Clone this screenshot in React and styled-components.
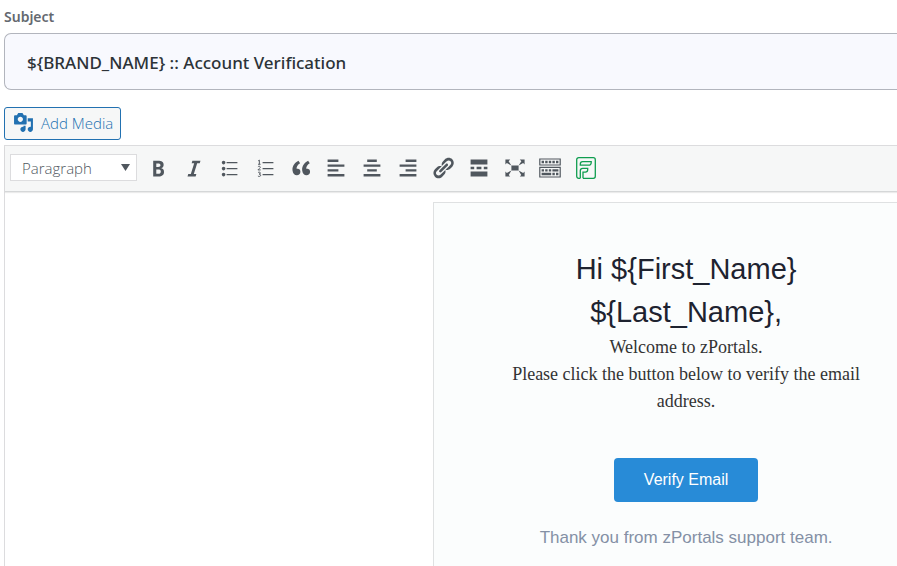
import React, { useState } from 'react';
import styled, { createGlobalStyle } from 'styled-components';

const GlobalStyle = createGlobalStyle`
  * {
    box-sizing: border-box;
  }

  body {
    margin: 0;
    background: #fff;
    color: #3c434a;
    font-family: 'Open Sans', 'Noto Sans', sans-serif;
  }
`;

const Page = styled.main`
  min-height: 100vh;
  padding: 8px 0 0 4px;
  display: flex;
  flex-direction: column;
`;

const SubjectField = styled.div`
  display: flex;
  flex-direction: column;
  gap: 8px;
`;

const SubjectLabel = styled.label`
  font-family: 'Noto Sans', sans-serif;
  font-size: 14px;
  line-height: 17px;
  font-weight: 600;
  color: #646970;
`;

const SubjectInput = styled.input`
  width: 100%;
  height: 57px;
  padding: 2px 22px 0;
  border: 1px solid #b2b5bd;
  border-right: none;
  border-radius: 7px 0 0 7px;
  background: #f8f9fe;
  color: #2c3338;
  font-family: 'Noto Sans', sans-serif;
  font-size: 17px;
  font-weight: 500;
`;

const MediaButton = styled.button`
  align-self: flex-start;
  height: 33px;
  margin: 17px 0 5px;
  padding: 0 7px 2px 8px;
  display: flex;
  align-items: center;
  gap: 7px;
  border: 1px solid #2271b1;
  border-radius: 3px;
  background: #f6f7f7;
  color: #2271b1;
  font-family: inherit;
  font-size: 15px;
  font-weight: 300;
  cursor: pointer;
`;

const Editor = styled.section`
  flex: 1;
  display: flex;
  flex-direction: column;
  border: 1px solid #dcdcde;
  border-width: 1px 0 0 1px;
`;

const Toolbar = styled.div`
  height: 46px;
  padding: 0 5px 2px;
  display: flex;
  align-items: center;
  gap: 4px;
  background: #f6f7f7;
  border-bottom: 1px solid #d5d7d8;
  box-shadow: 0 1px 1px rgba(0, 0, 0, 0.08);
`;

const FormatBox = styled.div`
  width: 127px;
  display: grid;
  align-items: center;

  > * {
    grid-area: 1 / 1;
  }

  svg {
    justify-self: end;
    margin-right: 7px;
    pointer-events: none;
  }
`;

const FormatSelect = styled.select`
  appearance: none;
  width: 100%;
  height: 27px;
  padding: 0 11px;
  border: 1px solid #dcdcde;
  border-radius: 0;
  background: #fff;
  color: #50575e;
  font-family: inherit;
  font-size: 15px;
  font-weight: 300;
`;

const ToolGroup = styled.div`
  width: 462px;
  display: flex;
  justify-content: space-between;
`;

const ToolButton = styled.button`
  width: 34px;
  height: 34px;
  padding: 0;
  display: flex;
  align-items: center;
  justify-content: center;
  border: none;
  background: none;
  color: ${({ $color }) => $color || '#50575e'};
  cursor: pointer;
`;

const Canvas = styled.div`
  flex: 1;
  padding: 10px 0 0 48%;
  display: flex;
`;

const MailCard = styled.article`
  flex: 1;
  padding: 45px 34px 0 75px;
  display: flex;
  flex-direction: column;
  align-items: center;
  border: 1px solid #dfe1e2;
  border-width: 1px 0 0 1px;
  background: #fbfdfd;
  text-align: center;
  font-family: 'Liberation Sans', Arial, sans-serif;
`;

const Greeting = styled.h1`
  margin: 0;
  color: #1e2330;
  font-size: 29px;
  line-height: 43px;
  font-weight: 400;
`;

const Message = styled.p`
  margin: 0;
  color: #333;
  font-family: 'Liberation Serif', 'Times New Roman', serif;
  font-size: 18px;
  line-height: 27px;
`;

const VerifyLink = styled.a`
  margin: 43px 0 22px;
  padding: 0 30px;
  border-radius: 4px;
  background: #288bd7;
  color: #fff;
  font-size: 16px;
  line-height: 44px;
  text-decoration: none;
`;

const SignOff = styled.p`
  margin: 0;
  color: #8490a5;
  font-size: 17px;
  line-height: 27px;
`;

const Glyph = ({ d, size = 24 }) => (
  <svg width={size} height={size} viewBox="0 0 20 20" fill="currentColor" fillRule="evenodd" aria-hidden="true">
    <path d={d} />
  </svg>
);

const mediaPath =
  'M13 11V4c0-.55-.45-1-1-1h-1.67L9 1H5L3.67 3H2c-.55 0-1 .45-1 1v7c0 .55.45 1 1 1h10c.55 0 1-.45 1-1zM7 4.5c1.38 0 2.5 1.12 2.5 2.5S8.38 9.5 7 9.5 4.5 8.38 4.5 7 5.62 4.5 7 4.5zM14 6h5v10.5c0 1.38-1.12 2.5-2.5 2.5S14 17.88 14 16.5s1.12-2.5 2.5-2.5c.17 0 .34.02.5.05V9h-3V6zm-4 8.05V13h2v3.5c0 1.38-1.12 2.5-2.5 2.5S7 17.88 7 16.5 8.12 14 9.5 14c.17 0 .34.02.5.05z';

const NumberedList = () => (
  <svg width="24" height="24" viewBox="0 0 20 20" fill="none" stroke="currentColor" aria-hidden="true">
    <path d="M8 5.5h9M8 10.5h9M8 15.5h9" />
    <path
      strokeWidth="0.8"
      d="M4.3 4.1l1-.7v3.4M4.2 6.9h2.1M4.1 9c.5-.7 2-.6 2 .3 0 .8-1.3 1.4-2 2.3h2.3M4.2 13.8c.7-.6 2-.4 2 .4 0 .6-.6.9-1.2.9.7 0 1.4.3 1.4 1 0 1-1.5 1.2-2.3.6"
    />
  </svg>
);

const FormIcon = () => (
  <svg width="20" height="22" viewBox="0 0 20 22" fill="none" stroke="currentColor" strokeWidth="1.3" aria-hidden="true">
    <path d="M4.3 21.3H2.7a2 2 0 0 1-2-2V2.7a2 2 0 0 1 2-2h14.6a2 2 0 0 1 2 2v16.6a2 2 0 0 1-2 2H7" />
    <path d="M6.6 4.6h8.6v1.2a2.4 2.4 0 0 1-2.4 2.4H4.3V7a2.4 2.4 0 0 1 2.3-2.4z" />
    <path d="M4.3 21.3v-7.5a2.4 2.4 0 0 1 2.4-2.4h5v1.3a2.4 2.4 0 0 1-2.4 2.4H7v6.2" />
  </svg>
);

const tools = [
  {
    label: 'Bold',
    d: 'M6 4v13h4.54c1.37 0 2.46-.33 3.26-1 .8-.66 1.2-1.58 1.2-2.77 0-.84-.17-1.51-.51-2.01s-.9-.85-1.67-1.03v-.09c.57-.1 1.02-.4 1.36-.9s.51-1.13.51-1.91c0-1.14-.39-1.98-1.17-2.5C12.75 4.26 11.5 4 9.78 4H6zm2.57 5.15V6.26h1.36c.73 0 1.27.11 1.61.32.34.22.51.58.51 1.07 0 .54-.16.92-.47 1.15s-.82.35-1.51.35h-1.5zm0 2.19h1.6c1.44 0 2.16.53 2.16 1.61 0 .6-.17 1.05-.51 1.34s-.86.43-1.57.43H8.57v-3.38z',
  },
  { label: 'Italic', d: 'M14.78 6h-2.13l-2.8 9h2.12l-.62 2H4.6l.62-2h2.14l2.8-9H8.03l.62-2h6.75z' },
  {
    label: 'Bulleted list',
    d: 'M5.5 7C4.67 7 4 6.33 4 5.5 4 4.68 4.67 4 5.5 4 6.32 4 7 4.68 7 5.5 7 6.33 6.32 7 5.5 7zM8 5h9v1H8V5zm-2.5 7c-.83 0-1.5-.67-1.5-1.5C4 9.68 4.67 9 5.5 9c.82 0 1.5.68 1.5 1.5 0 .83-.68 1.5-1.5 1.5zM8 10h9v1H8v-1zm-2.5 7c-.83 0-1.5-.67-1.5-1.5 0-.82.67-1.5 1.5-1.5.82 0 1.5.68 1.5 1.5 0 .83-.68 1.5-1.5 1.5zM8 15h9v1H8v-1z',
  },
  { label: 'Numbered list', icon: <NumberedList /> },
  {
    label: 'Blockquote',
    d: 'M9.49 13.22c0-.74-.2-1.38-.61-1.9-.62-.78-1.83-.88-2.53-.72-.29-1.65 1.11-3.75 2.92-4.65L7.88 4c-2.73 1.3-5.42 4.28-4.96 8.05C3.21 14.43 4.59 16 6.54 16c.85 0 1.56-.25 2.12-.75s.83-1.18.83-2.03zm8.05 0c0-.74-.2-1.38-.61-1.9-.63-.78-1.83-.88-2.53-.72-.29-1.65 1.11-3.75 2.92-4.65L15.93 4c-2.73 1.3-5.41 4.28-4.95 8.05.29 2.38 1.66 3.95 3.61 3.95.85 0 1.56-.25 2.12-.75s.83-1.18.83-2.03z',
  },
  { label: 'Align left', d: 'M12 5V3H3v2h9zm5 4V7H3v2h14zm-5 4v-2H3v2h9zm5 4v-2H3v2h14z' },
  { label: 'Align center', d: 'M14 5V3H6v2h8zm3 4V7H3v2h14zm-3 4v-2H6v2h8zm3 4v-2H3v2h14z' },
  { label: 'Align right', d: 'M17 5V3H8v2h9zm0 4V7H3v2h14zm0 4v-2H8v2h9zm0 4v-2H3v2h14z' },
  {
    label: 'Insert link',
    d: 'M17.74 2.76c1.68 1.69 1.68 4.41 0 6.1l-1.53 1.52c-1.12 1.12-2.7 1.47-4.14 1.09l2.62-2.61.76-.77.76-.76c.84-.84.84-2.2 0-3.04-.84-.85-2.2-.85-3.04 0l-.77.76-3.38 3.38c-.37-1.44-.02-3.02 1.1-4.14l1.52-1.53c1.69-1.68 4.42-1.68 6.1 0zM8.59 13.43l5.34-5.34c.42-.42.42-1.1 0-1.52-.44-.43-1.13-.39-1.53 0l-5.33 5.34c-.42.42-.42 1.1 0 1.52.44.43 1.13.39 1.52 0zm-.76 2.29l4.14-4.15c.38 1.44.03 3.02-1.09 4.14l-1.52 1.53c-1.69 1.68-4.41 1.68-6.1 0-1.68-1.68-1.68-4.42 0-6.1l1.53-1.52c1.12-1.12 2.7-1.47 4.14-1.1l-4.14 4.15c-.85.84-.85 2.2 0 3.05.84.84 2.2.84 3.04 0z',
  },
  { label: 'Read more', d: 'M17 7V3H3v4h14zM6 11V9H3v2h3zm6 0V9H8v2h4zm5 0V9h-3v2h3zm0 6v-4H3v4h14z' },
  {
    label: 'Fullscreen',
    d: 'M7 8h6v4H7zm-5 5v4h4l-1.2-1.2L7 12l-3.8 2.2M14 17h4v-4l-1.2 1.2L13 12l2.2 3.8M14 3l1.3 1.3L13 8l3.8-2.2L18 7V3M6 3H2v4l1.2-1.2L7 8 4.7 4.3',
  },
  {
    label: 'Toolbar toggle',
    d: 'M19 2v6H1V2h18zm-1 5V3H2v4h16zM5 4v2H3V4h2zm3 0v2H6V4h2zm3 0v2H9V4h2zm3 0v2h-2V4h2zm3 0v2h-2V4h2zm2 5v9H1V9h18zm-1 8v-7H2v7h16zM5 11v2H3v-2h2zm3 0v2H6v-2h2zm3 0v2H9v-2h2zm6 0v2h-5v-2h5zm-6 3v2H3v-2h8zm3 0v2h-2v-2h2zm3 0v2h-2v-2h2z',
  },
  { label: 'Insert form', icon: <FormIcon />, color: '#0f9d4f' },
];

function App() {
  const [subject, setSubject] = useState('${BRAND_NAME} :: Account Verification');
  const [format, setFormat] = useState('p');

  return (
    <>
      <GlobalStyle />
      <Page>
        <SubjectField>
          <SubjectLabel htmlFor="subject">Subject</SubjectLabel>
          <SubjectInput id="subject" type="text" value={subject} onChange={(e) => setSubject(e.target.value)} />
        </SubjectField>
        <MediaButton type="button">
          <Glyph d={mediaPath} size={21} />
          Add Media
        </MediaButton>
        <Editor>
          <Toolbar>
            <FormatBox>
              <FormatSelect aria-label="Format" value={format} onChange={(e) => setFormat(e.target.value)}>
                <option value="p">Paragraph</option>
              </FormatSelect>
              <svg width="9" height="7" viewBox="0 0 9 7" fill="#50575e" aria-hidden="true">
                <path d="M0 0h9L4.5 7z" />
              </svg>
            </FormatBox>
            <ToolGroup>
              {tools.map((tool) => (
                <ToolButton key={tool.label} type="button" aria-label={tool.label} $color={tool.color}>
                  {tool.icon || <Glyph d={tool.d} />}
                </ToolButton>
              ))}
            </ToolGroup>
          </Toolbar>
          <Canvas>
            <MailCard>
              <Greeting>
                {'Hi ${First_Name}'}
                <br />
                {'${Last_Name},'}
              </Greeting>
              <Message>
                Welcome to zPortals.
                <br />
                Please click the button below to verify the email address.
              </Message>
              <VerifyLink href="#verify">Verify Email</VerifyLink>
              <SignOff>Thank you from zPortals support team.</SignOff>
            </MailCard>
          </Canvas>
        </Editor>
      </Page>
    </>
  );
}

export default App;
